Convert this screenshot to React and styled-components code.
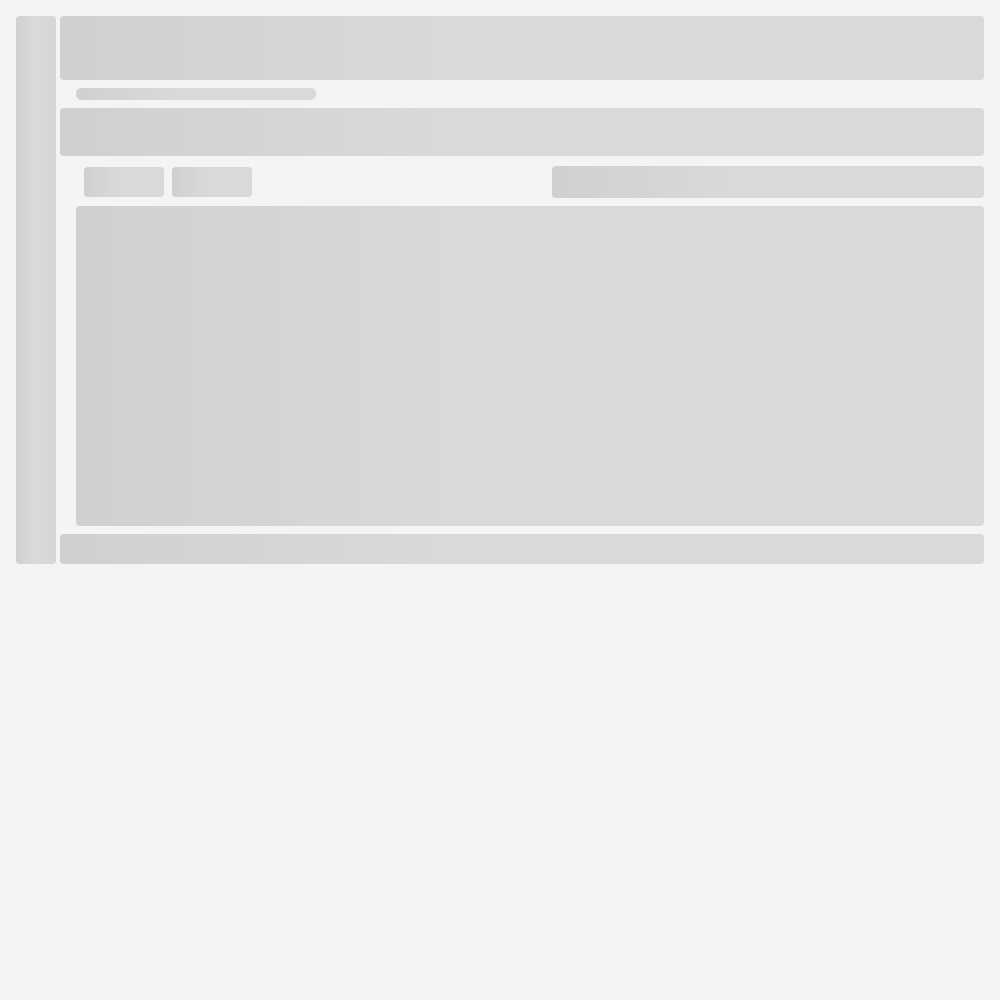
import React from 'react';
import styled, { createGlobalStyle } from 'styled-components';

const GlobalStyle = createGlobalStyle`
  body {
    margin: 0;
    background-color: #f4f4f4;
    font-family: "Liberation Sans", Arial, sans-serif;
  }
`;

const Bone = styled.div`
  background: linear-gradient(90deg, #d0d0d0 0%, #d9d9d9 40%, #d9d9d9 100%);
  border-radius: ${(p) => p.$radius || 4}px;
  height: ${(p) => p.$h}px;
  width: ${(p) => (p.$w ? `${p.$w}px` : 'auto')};
  flex-shrink: 0;
`;

const Page = styled.div`
  display: flex;
  gap: 4px;
  padding: 16px;
  width: 968px;
`;

const Sidebar = styled(Bone)`
  width: 40px;
  background: linear-gradient(90deg, #d0d0d0 0%, #dadada 50%, #d6d6d6 100%);
`;

const Main = styled.div`
  flex: 1;
  display: flex;
  flex-direction: column;
`;

const Indented = styled.div`
  margin-left: 16px;
  margin-top: ${(p) => p.$top || 0}px;
`;

const Toolbar = styled.div`
  display: flex;
  align-items: center;
  justify-content: space-between;
  height: 32px;
  margin: 10px 0 8px;
  padding-left: 24px;
`;

const ButtonGroup = styled.div`
  display: flex;
  gap: 8px;
`;

const Spacer = styled.div`
  height: ${(p) => p.$h}px;
`;

const App = () => {
  return (
    <>
      <GlobalStyle />
      <Page>
        <Sidebar $h={548} />
        <Main>
          <Bone $h={64} />
          <Indented $top={8}>
            <Bone $h={12} $w={240} $radius={5} />
          </Indented>
          <Spacer $h={8} />
          <Bone $h={48} />
          <Toolbar>
            <ButtonGroup>
              <Bone $h={30} $w={80} />
              <Bone $h={30} $w={80} />
            </ButtonGroup>
            <Bone $h={32} $w={432} />
          </Toolbar>
          <Indented>
            <Bone $h={320} />
          </Indented>
          <Spacer $h={8} />
          <Bone $h={30} />
        </Main>
      </Page>
    </>
  );
};

export default App;
